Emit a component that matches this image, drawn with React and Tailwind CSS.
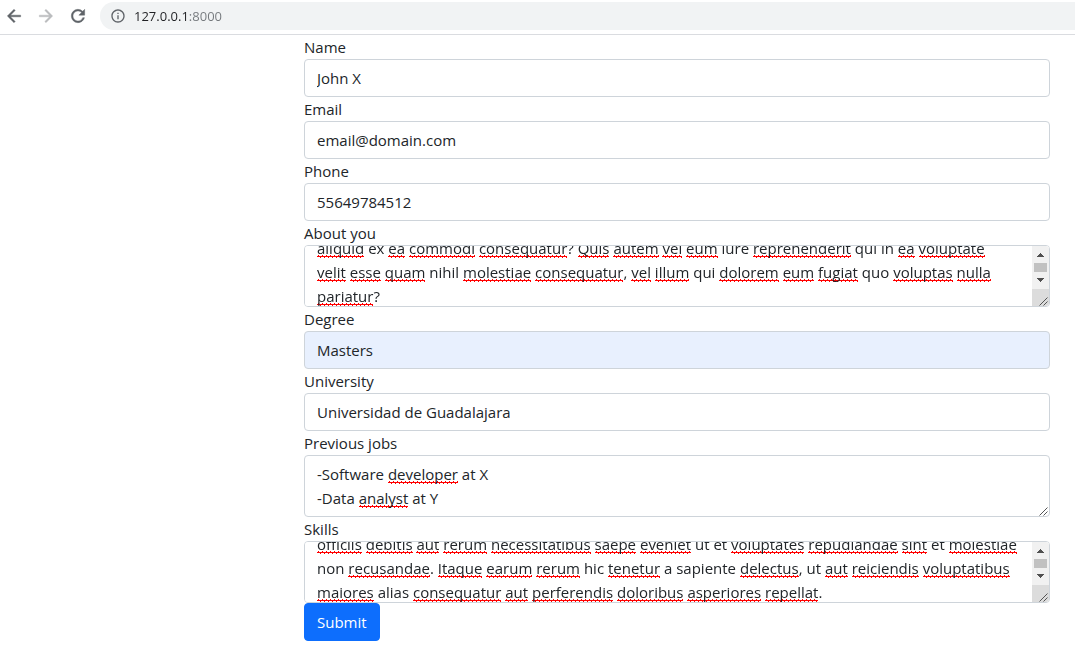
import { useLayoutEffect, useRef, useState } from "react";
import { MdArrowBack, MdArrowForward, MdRefresh, MdInfoOutline } from "react-icons/md";

const box =
  "block w-full rounded border border-[#ced4da] bg-white px-3 text-[15px] leading-6 text-[#212529] outline-none focus:border-[#86b7fe]";

const squiggle =
  "bg-[linear-gradient(90deg,#ff000000_1px,#f00_1px,#f00_2px,#ff000000_2px),linear-gradient(#f00,#f00),linear-gradient(90deg,#ff000000_3px,#f00_3px)] bg-[length:4px_1px] bg-repeat-x [background-position:0_calc(100%-2px),0_calc(100%-1px),0_100%]";

const ABOUT = `aliquid ex ea commodi consequatur? Quis autem vel eum iure reprehenderit qui in ea voluptate
velit esse quam nihil molestiae consequatur, vel illum qui dolorem eum fugiat quo voluptas nulla
pariatur?`;

const JOBS = `-Software developer at X
-Data analyst at Y`;

const SKILLS = `officiis debitis aut rerum necessitatibus saepe eveniet ut et voluptates repudiandae sint et molestiae
non recusandae. Itaque earum rerum hic tenetur a sapiente delectus, ut aut reiciendis voluptatibus
maiores alias consequatur aut perferendis doloribus asperiores repellat.`;

// Words the spelling checker leaves unmarked.
const KNOWN = new Set(
  "ex iure qui in nihil quo ut et non hic a sapiente alias Software at X Data Y".split(" ")
);

function Field({ id, label, type = "text", value, filled }) {
  return (
    <div>
      <label htmlFor={id} className="block w-fit leading-6">{label}</label>
      <input
        id={id}
        type={type}
        defaultValue={value}
        className={`${box} h-[38px] ${filled ? "bg-[#e8f0fe]!" : ""}`}
      />
    </div>
  );
}

// The textarea takes the input; the layer over it draws its text with the spelling marks.
function Area({ id, label, text, scroll = 0, bar }) {
  const area = useRef(null);
  const layer = useRef(null);
  const [value, setValue] = useState(text);
  const sync = () => {
    layer.current.scrollTop = area.current.scrollTop;
  };

  useLayoutEffect(() => {
    area.current.scrollTop = scroll;
    sync();
  }, [scroll]);

  return (
    <div>
      <label htmlFor={id} className="block w-fit leading-6">{label}</label>
      <div className="relative">
        <textarea
          id={id}
          ref={area}
          rows={2}
          spellCheck={false}
          value={value}
          onScroll={sync}
          onChange={(e) => setValue(e.target.value)}
          className={`${box} h-[62px] resize-none overflow-y-auto py-1.5 whitespace-pre text-transparent! caret-[#212529] [scrollbar-width:none]`}
        />
        <div
          ref={layer}
          aria-hidden="true"
          className="pointer-events-none absolute inset-px overflow-hidden px-3 py-1.5 leading-6 whitespace-pre"
        >
          {value.split(/([A-Za-z]+)/).map((part, i) =>
            i % 2 && !KNOWN.has(part) ? <span key={i} className={squiggle}>{part}</span> : part
          )}
        </div>
        <svg
          aria-hidden="true"
          viewBox="0 0 17 60"
          className="pointer-events-none absolute top-px right-px h-[60px] w-[17px] rounded-r-[3px]"
        >
          {bar && (
            <g shapeRendering="crispEdges">
              <path d="M0 0h17v43H0z" fill="#f1f1f1" />
              <path d="M0 43h17v17H0z" fill="#dcdcdc" />
              <path d="M2 17h13v9H2z" fill="#c1c1c1" />
              <path d="M8 7h1v1h1v1h1v1h1v1H5v-1h1V9h1V8h1z" fill="#505050" />
              <path d="M5 32h7v1h-1v1h-1v1H9v1H8v-1H7v-1H6v-1H5z" fill="#505050" />
            </g>
          )}
          <path d="M7.5 59.5l8-8M11.5 59.5l4-4" stroke="#555" strokeWidth="1" fill="none" />
        </svg>
      </div>
    </div>
  );
}

export default function App() {
  return (
    <div className="min-h-screen bg-white font-['Open_Sans',sans-serif] text-[15px] text-[#212529]">
      <header className="flex h-[35px] items-start border-b border-[#dadce0] pt-0.5 text-[#5f6368]">
        <nav className="flex h-7 items-center gap-3 pr-3 pl-1 [&_path:last-child]:[stroke-width:0.5px]">
          <button type="button" aria-label="Back"><MdArrowBack size={20} /></button>
          <button type="button" aria-label="Forward" className="text-[#babcbe]"><MdArrowForward size={20} /></button>
          <button type="button" aria-label="Reload"><MdRefresh size={20} /></button>
        </nav>
        <div className="flex h-7 flex-1 items-center gap-2 rounded-l-full bg-[#f1f3f4] pl-2.5">
          <MdInfoOutline size={16} />
          <input
            aria-label="Address"
            defaultValue="127.0.0.1:8000"
            className="min-w-0 flex-1 bg-linear-to-r from-[#202124] from-[54px] to-[#74787c] to-[54px] bg-clip-text text-[13px] leading-5 text-transparent outline-none"
          />
        </div>
      </header>
      <form className="mr-[25px] ml-[304px]" onSubmit={(e) => e.preventDefault()}>
        <Field id="name" label="Name" value="John X" />
        <Field id="email" label="Email" type="email" value="email@domain.com" />
        <Field id="phone" label="Phone" type="tel" value="55649784512" />
        <Area id="about" label="About you" text={ABOUT} scroll={16} bar />
        <Field id="degree" label="Degree" value="Masters" filled />
        <Field id="university" label="University" value="Universidad de Guadalajara" />
        <Area id="jobs" label="Previous jobs" text={JOBS} />
        <Area id="skills" label="Skills" text={SKILLS} scroll={16} bar />
        <button type="submit" className="h-[38px] rounded border border-[#0d6efd] bg-[#0d6efd] px-3 leading-6 text-white">
          Submit
        </button>
      </form>
    </div>
  );
}
